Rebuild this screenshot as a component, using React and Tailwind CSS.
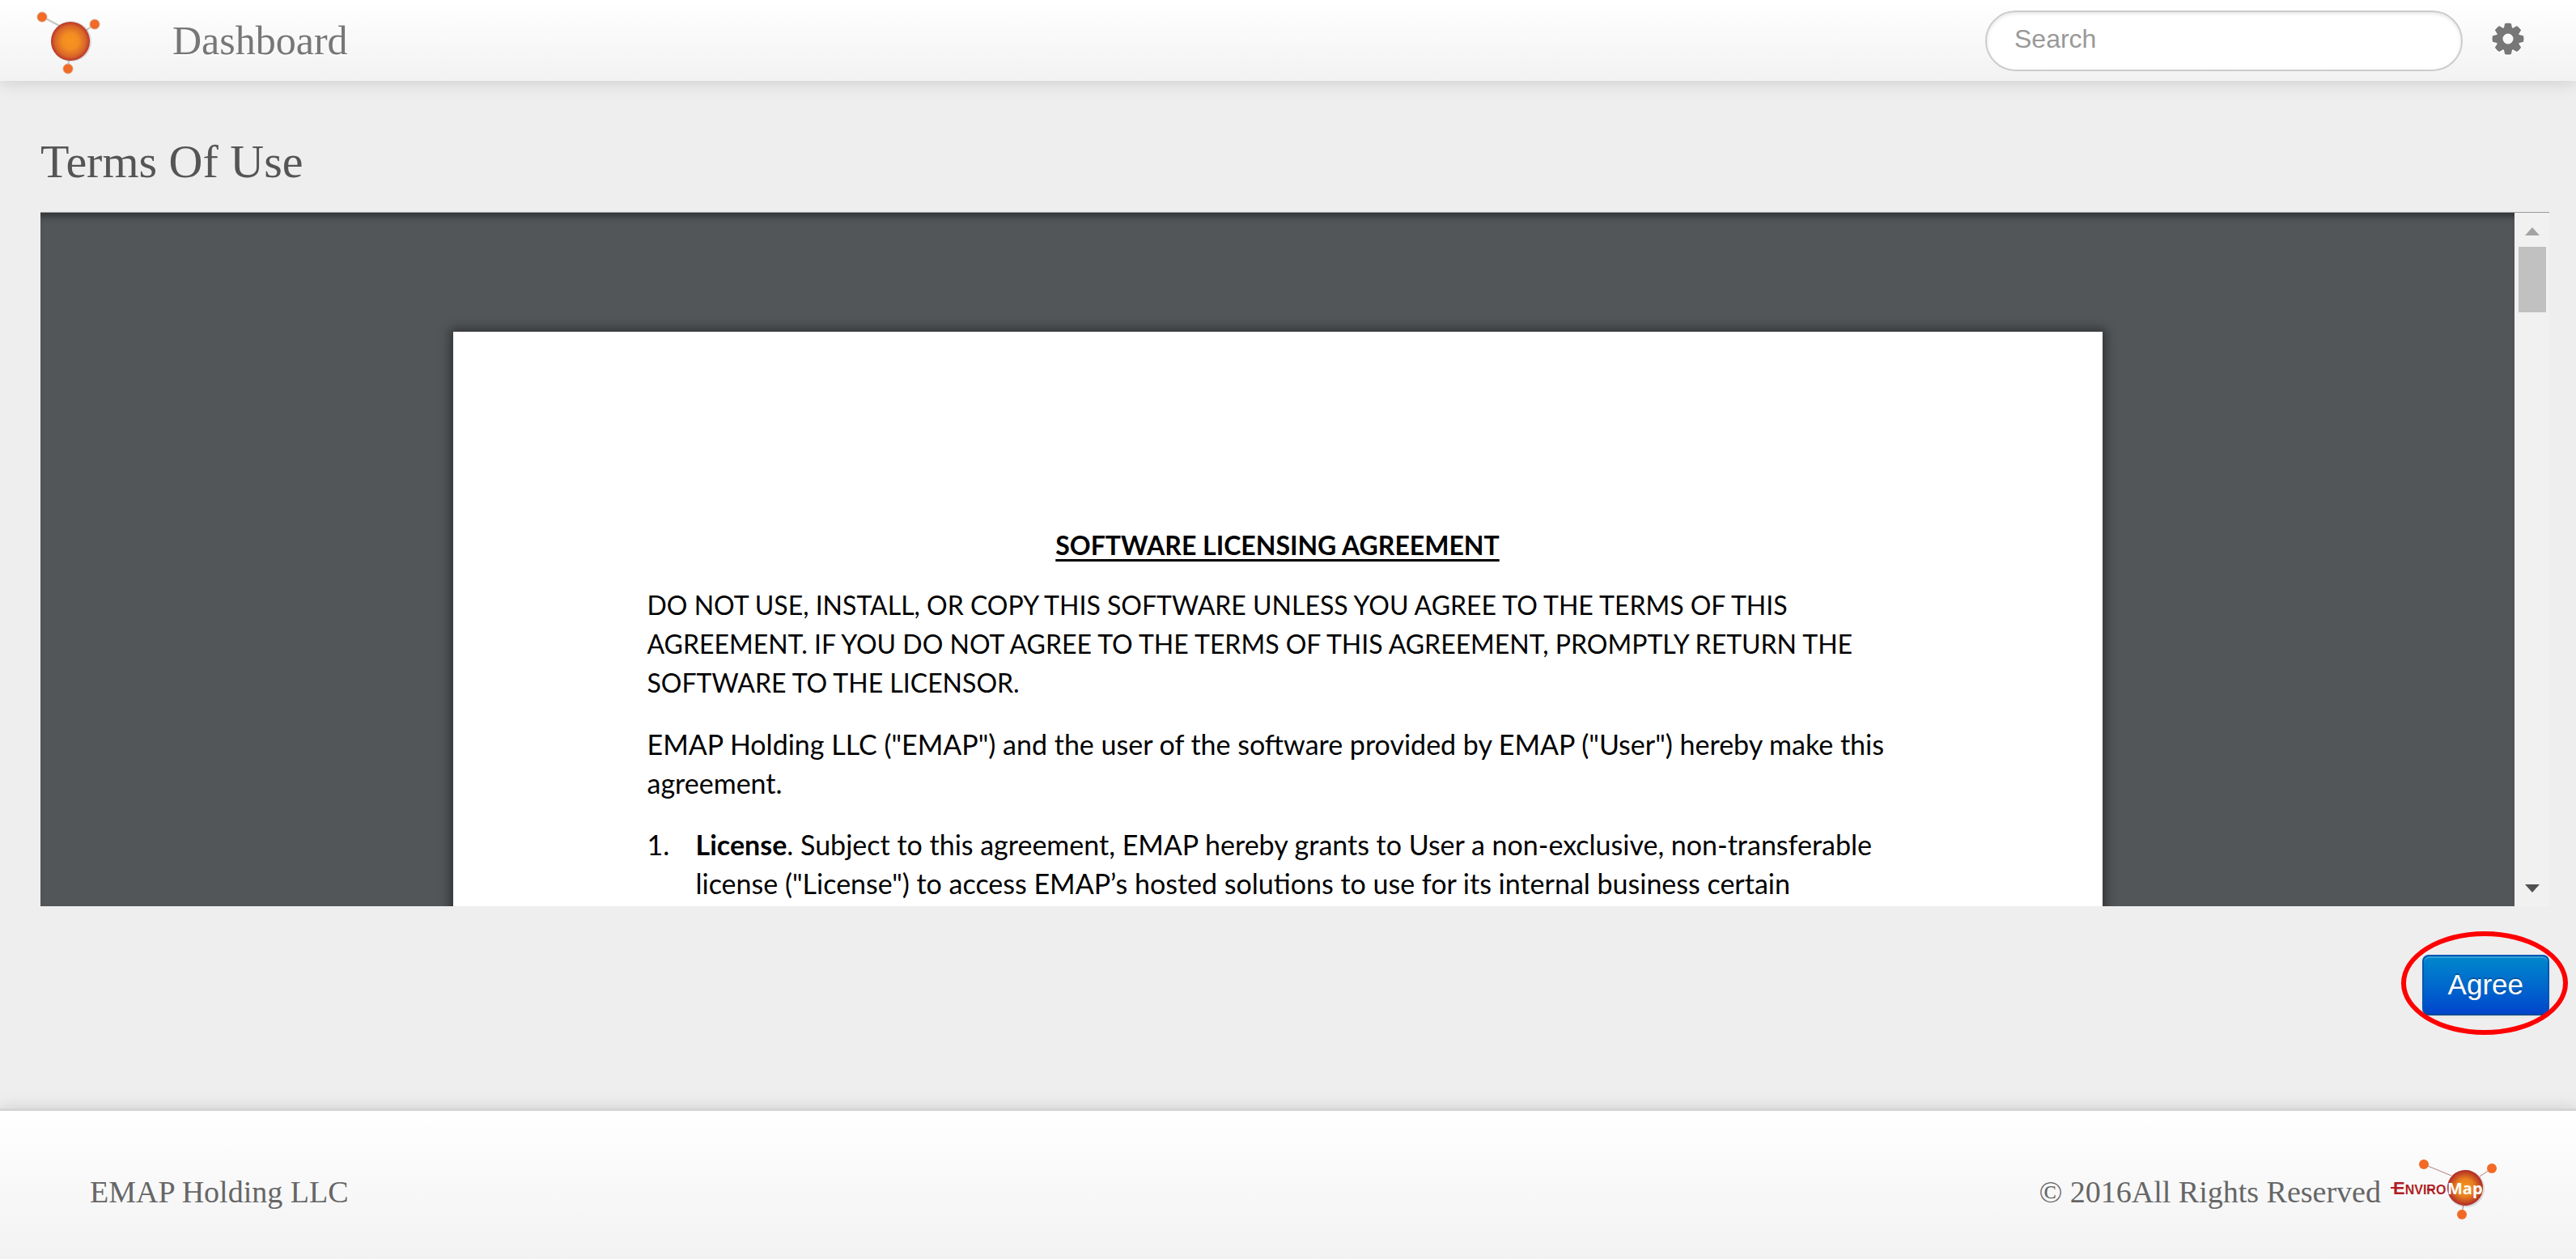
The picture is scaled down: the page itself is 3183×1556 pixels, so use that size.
const serif = "font-['Liberation_Serif',serif]";

function Logo() {
  return (
    <svg viewBox="0 0 80 80" className="mt-1.5 size-20" role="img" aria-label="EnviroMap home">
      <defs>
        <radialGradient id="core">
          <stop offset="0" stopColor="#f7931e" />
          <stop offset="0.4" stopColor="#f28e22" />
          <stop offset="0.8" stopColor="#d86428" />
          <stop offset="1" stopColor="#b9342a" />
        </radialGradient>
      </defs>
      <path d="M8 8 42 26M72 17 42 38M39 72 42 38" stroke="#c9c4c4" strokeWidth="2" />
      <circle cx="43" cy="38" r="25" fill="#000" opacity="0.12" />
      <circle cx="42" cy="38" r="24" fill="url(#core)" />
      <circle cx="7" cy="8" r="6" fill="#f26a25" stroke="#d9a184" />
      <circle cx="72" cy="17" r="6" fill="#f26a25" stroke="#d9a184" />
      <circle cx="39" cy="72" r="6" fill="#f26a25" stroke="#d9a184" />
    </svg>
  );
}

function FooterLogo() {
  return (
    <svg viewBox="0 0 133 76" className="mb-1.5 h-[76px] w-[133px]" role="img" aria-label="EnviroMap">
      <defs>
        <radialGradient id="footCore">
          <stop offset="0" stopColor="#f7941e" />
          <stop offset="0.5" stopColor="#e8801f" />
          <stop offset="1" stopColor="#b02a26" />
        </radialGradient>
      </defs>
      <path d="M41 7 75 21M125 12 110 22M88 69 90 55" stroke="#b87b7b" />
      <circle cx="93" cy="37" r="23" fill="#000" opacity="0.12" />
      <circle cx="92" cy="36" r="22" fill="url(#footCore)" />
      <circle cx="41" cy="7" r="6" fill="#f26a25" />
      <circle cx="125" cy="12" r="6" fill="#f26a25" />
      <circle cx="88" cy="69" r="6" fill="#f26a25" />
      <path d="M0 36H16M45 38H54" stroke="#b01e23" strokeWidth="2" />
      <text x="3" y="44" fill="#b01e23" fontFamily="Liberation Sans, sans-serif" fontWeight="700" fontSize="22">
        E<tspan fontSize="16">NVIRO</tspan>
      </text>
      <text x="70" y="44" fill="#fff" fontFamily="Open Sans, sans-serif" fontWeight="700" fontSize="20">Map</text>
    </svg>
  );
}

const TEETH = [0, 45, 90, 135, 180, 225, 270, 315];

function Gear() {
  return (
    <svg viewBox="-20 -20 40 40" className="mb-1 size-10 drop-shadow-[0_2px_0_#fff]" fill="currentColor">
      <circle r="10.5" fill="none" stroke="currentColor" strokeWidth="8" />
      {TEETH.map((angle) => (
        <path key={angle} d="M-5.5-12-3.8-19Q0-20 3.8-19L5.5-12z" transform={`rotate(${angle})`} />
      ))}
    </svg>
  );
}

function Header() {
  return (
    <header className="relative z-10 flex h-[100px] shrink-0 items-center bg-gradient-to-b from-white to-[#f2f2f2] pr-16 pl-[45px] shadow-[0_2px_20px_rgba(0,0,0,0.14)]">
      <a href="#home"><Logo /></a>
      <a href="#dashboard" className={`${serif} ml-[88px] text-[50px] leading-[60px] text-[#777] [text-shadow:0_2px_0_#fff]`}>
        Dashboard
      </a>
      <input
        type="search"
        aria-label="Search"
        placeholder="Search"
        className="ml-auto h-[75px] w-[590px] rounded-full border-2 border-[#ccc] bg-white px-[34px] pb-1 font-['Liberation_Sans',sans-serif] text-[32px] text-[#555] shadow-[inset_0_2px_4px_rgba(0,0,0,0.1)] placeholder:text-[#999]"
      />
      <button type="button" aria-label="Settings" className="ml-9 text-[#777]">
        <Gear />
      </button>
    </header>
  );
}

function Scrollbar() {
  return (
    <div className="flex w-[43px] shrink-0 flex-col items-center bg-[#f1f1f1]">
      <button type="button" aria-label="Scroll up" className="flex h-[42px] items-center pt-1">
        <svg viewBox="0 0 18 10" className="h-[10px] w-[18px]"><path d="M0 10 9 0l9 10z" fill="#a3a3a3" /></svg>
      </button>
      <div className="h-[81px] w-[34px] bg-[#c1c1c1]" />
      <button type="button" aria-label="Scroll down" className="mt-auto flex h-[44px] items-center">
        <svg viewBox="0 0 18 10" className="h-[10px] w-[18px]"><path d="M0 0h18L9 10z" fill="#505050" /></svg>
      </button>
    </div>
  );
}

function Viewer() {
  return (
    <section aria-label="Agreement document" className="flex min-h-0 flex-1 border-t border-[#999]">
      <div className="flex-1 overflow-hidden bg-[#525659] pt-[147px] shadow-[inset_0_10px_8px_-6px_rgba(0,0,0,0.45)]">
        <article className="mx-auto w-2/3 bg-white px-60 pt-[240px] pb-4 font-['Lato',sans-serif] text-[34px] leading-[48px] text-black shadow-[0_0_12px_4px_rgba(0,0,0,0.4)]">
          <h2 className="mb-[26px] text-center text-[32px] font-bold underline decoration-[3px] underline-offset-[5px]">
            SOFTWARE LICENSING AGREEMENT
          </h2>
          <p className="mb-[28px] text-[32px]">
            DO NOT USE, INSTALL, OR COPY THIS SOFTWARE UNLESS YOU AGREE TO THE TERMS OF THIS<br />
            AGREEMENT. IF YOU DO NOT AGREE TO THE TERMS OF THIS AGREEMENT, PROMPTLY RETURN THE<br />
            SOFTWARE TO THE LICENSOR.
          </p>
          <p className="mb-[28px]">
            EMAP Holding LLC ("EMAP") and the user of the software provided by EMAP ("User") hereby make this<br />
            agreement.
          </p>
          <ol>
            <li className="flex">
              <span className="w-[60px] shrink-0">1.</span>
              <p>
                <b>License</b>. Subject to this agreement, EMAP hereby grants to User a non-exclusive, non-transferable<br />
                license ("License") to access EMAP’s hosted solutions to use for its internal business certain
              </p>
            </li>
          </ol>
        </article>
      </div>
      <Scrollbar />
    </section>
  );
}

export default function App() {
  return (
    <div className="flex h-screen min-h-[900px] flex-col bg-[#eee]">
      <Header />
      <main className="flex min-h-0 flex-1 flex-col pr-[33px] pl-[50px]">
        <h1 className={`${serif} mt-[66px] mb-[28px] text-[58px] leading-[68px] text-[#555]`}>Terms Of Use</h1>
        <Viewer />
        <div className="mt-[60px] mb-[115px] flex justify-end">
          <div className="relative">
            <button
              type="button"
              className="h-[75px] rounded-lg border-2 border-[#0055b3] border-b-[#004a95] bg-gradient-to-b from-[#0088cc] to-[#0044cc] px-[30px] font-['Liberation_Sans',sans-serif] text-[35px] text-white shadow-[inset_0_2px_0_rgba(255,255,255,0.2),0_2px_4px_rgba(0,0,0,0.05)] [text-shadow:0_-2px_0_rgba(0,0,0,0.25)]"
            >
              Agree
            </button>
            <span className="pointer-events-none absolute -top-[29px] -right-[23px] -bottom-6 -left-[26px] rounded-[50%] border-[6px] border-[#f00]" />
          </div>
        </div>
      </main>
      <footer className={`${serif} flex h-[186px] shrink-0 items-center justify-between border-t-[3px] border-[#d5d5d5] bg-gradient-to-b from-white to-[#f2f2f2] pt-4 pr-24 pl-[111px] text-[38px] leading-[48px] text-[#666] shadow-[0_0_20px_rgba(0,0,0,0.14)]`}>
        <span>EMAP Holding LLC</span>
        <div className="flex items-center gap-3">
          <span>© 2016All Rights Reserved</span>
          <FooterLogo />
        </div>
      </footer>
    </div>
  );
}
